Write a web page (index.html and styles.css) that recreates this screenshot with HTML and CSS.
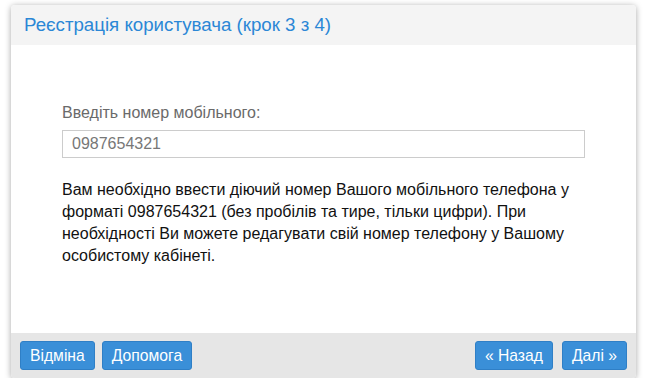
FILE: index.html
```html
<!DOCTYPE html>
<html>
<head>
<meta charset="utf-8">
<title>Реєстрація</title>
<link rel="stylesheet" href="styles.css">
</head>
<body>
<div class="panel">
	<div class="panelHead">Реєстрація користувача (крок 3 з 4)</div>
	<div class="panelBody">
		<div class="fieldLabel">Введіть номер мобільного:</div>
		<input type="text" class="inputPhone" value="0987654321">
		<p class="note">Вам необхідно ввести діючий номер Вашого мобільного телефона у форматі 0987654321 (без пробілів та тире, тільки цифри). При необхідності Ви можете редагувати свій номер телефону у Вашому особистому кабінеті.</p>
	</div>
	<div class="panelFoot">
		<div class="btGroup">
			<button class="btBlue">Відміна</button>
			<button class="btBlue">Допомога</button>
		</div>
		<div class="btGroup">
			<button class="btBlue">« Назад</button>
			<button class="btBlue">Далі »</button>
		</div>
	</div>
</div>
</body>
</html>
```
FILE: styles.css
```css
body{
	margin:0;
	background:#fff;
	font-family:"Liberation Sans", Arial, sans-serif;
}
.panel{
	margin:5px 0 0 11px;
	width:625px;
	height:373px;
	border-radius:4px;
	background:#fff;
	box-shadow:0 1px 6px rgba(0,0,0,0.35);
	display:flex;
	flex-direction:column;
	overflow:hidden;
}
.panelHead{
	height:40px;
	line-height:40px;
	padding-left:13px;
	background:#f4f4f4;
	color:#2b87d6;
	font-size:18.7px;
}
.panelBody{
	flex:1;
	padding:58px 51px 0 51px;
}
.fieldLabel{
	color:#6a6a6a;
	font-size:16px;
	line-height:19px;
}
.inputPhone{
	display:block;
	box-sizing:border-box;
	margin-top:8px;
	width:523px;
	height:28px;
	border:1px solid #ccc;
	padding:0 9px;
	font-family:"Liberation Sans", Arial, sans-serif;
	font-size:16px;
	color:#777;
}
.note{
	margin:21px 0 0 0;
	width:524px;
	font-size:16px;
	line-height:22px;
	color:#111;
}
.panelFoot{
	height:45px;
	box-sizing:border-box;
	padding:8px 9px;
	background:#e6e6e6;
	display:flex;
	justify-content:space-between;
}
.btGroup{
	display:flex;
	gap:7px;
}
.btGroup + .btGroup{
	gap:9px;
}
.btBlue{
	height:29px;
	padding:0 9px;
	border:1px solid #2f7fc6;
	border-radius:3px;
	background:#3a8fd8;
	color:#fff;
	font-family:"Liberation Sans", Arial, sans-serif;
	font-size:15.7px;
}
```
